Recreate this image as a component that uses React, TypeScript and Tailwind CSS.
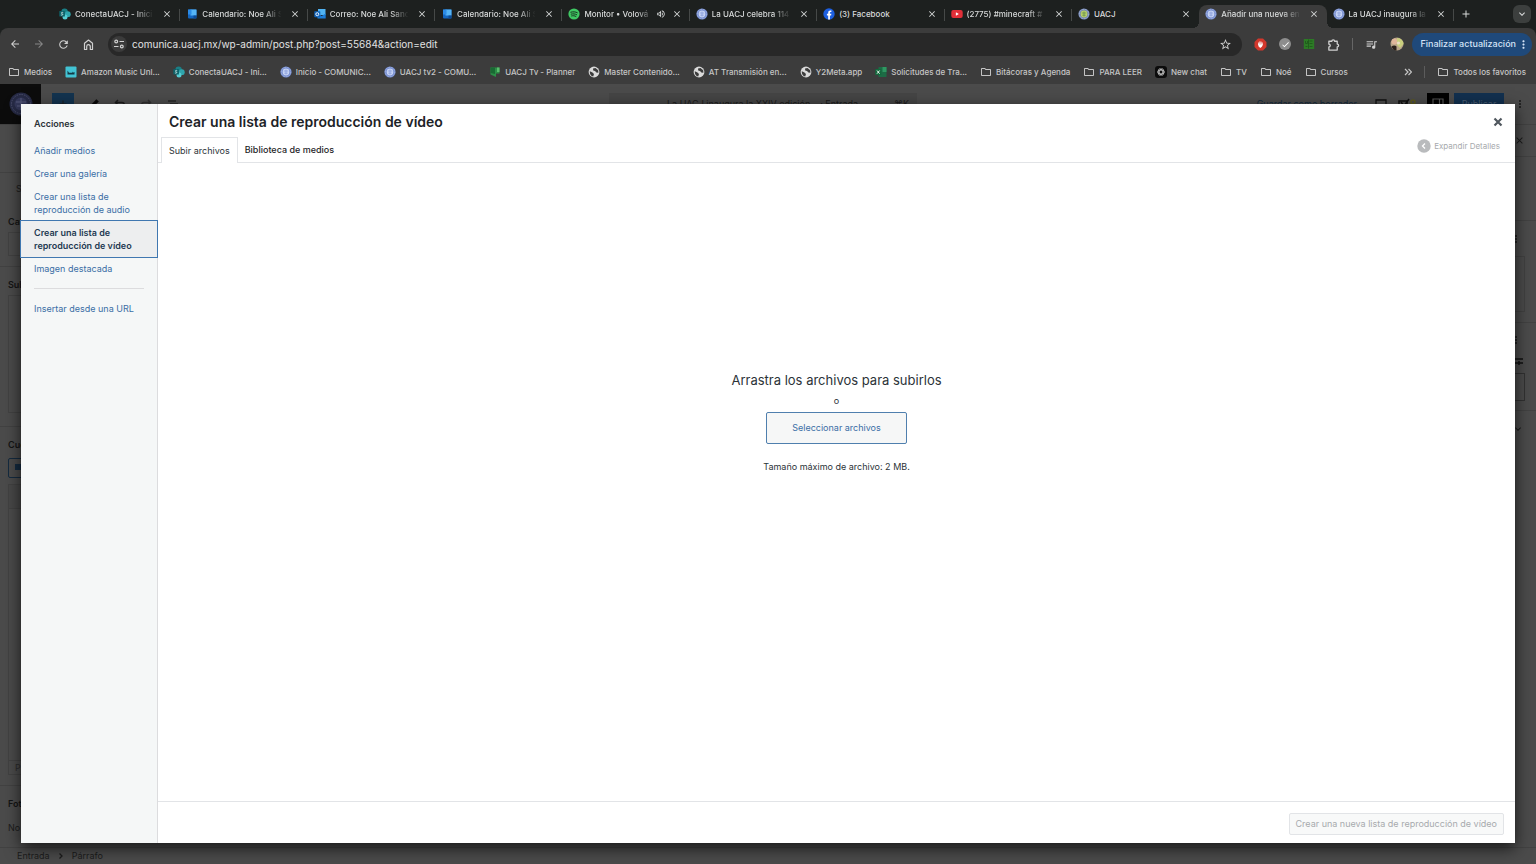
import type { ReactNode } from "react"
import {
  MdAdd,
  MdArrowBack,
  MdArrowForward,
  MdCheck,
  MdClose,
  MdExpandMore,
  MdMoreVert,
  MdOutlineFolder,
  MdOutlineVolumeUp,
  MdQueueMusic,
  MdRefresh,
  MdStarBorder,
} from "react-icons/md"

type IconName =
  | "sharepoint"
  | "calendar"
  | "outlook"
  | "spotify"
  | "crest"
  | "crestGreen"
  | "facebook"
  | "youtube"
  | "folder"
  | "amazon"
  | "planner"
  | "globe"
  | "excel"
  | "chat"

function Crest({ green }: { green?: boolean }) {
  return (
    <svg viewBox="0 0 12 12" className="size-3">
      <circle cx="6" cy="6" r="5.6" fill={green ? "#6f83ad" : "#6f88cc"} />
      <circle cx="6" cy="6" r="4.7" fill="none" stroke="#b4c2ea" strokeWidth=".9" strokeDasharray=".9 .7" />
      <circle cx="6" cy="6" r="3.4" fill={green ? "#b9cf6a" : "#c6d3f4"} />
      <path d="M6 3.5v5M3.8 5h4.4M4.300 7.200h3.400" stroke={green ? "#5f8a4a" : "#8299d8"} strokeWidth=".7" />
    </svg>
  )
}

function SiteIcon({ name }: { name: IconName }) {
  switch (name) {
    case "sharepoint":
      return (
        <svg viewBox="0 0 12 12" className="size-3">
          <circle cx="5.6" cy="3.6" r="3.2" fill="#1a7f86" />
          <circle cx="8.8" cy="6.2" r="2.9" fill="#2fa5ad" />
          <circle cx="6" cy="9" r="2.5" fill="#56cdd3" />
          <rect x=".3" y="3" width="5.6" height="5.6" rx=".6" fill="#0d6168" />
          <path d="M4.2 4.6c-1.6-.8-2.4.7-1.1 1.1 1.5.5.5 1.9-1.2 1.2" fill="none" stroke="#e5f6f6" strokeWidth=".8" />
        </svg>
      )
    case "calendar":
      return (
        <svg viewBox="0 0 12 12" className="size-3">
          <rect x="2" y="1.5" width="8.5" height="9" rx="1" fill="#1466c0" />
          <rect x="4.5" y="1.5" width="6" height="6" fill="#55b4f5" />
          <path d="M2 1.5h3.5v5H2Z" fill="#2b8be6" />
          <path d="M7.5 7.5h3v3h-3Z" fill="#0d4a94" />
        </svg>
      )
    case "outlook":
      return (
        <svg viewBox="0 0 12 12" className="size-3">
          <rect x="4" y="1" width="7.5" height="6" fill="#50b3f2" />
          <path d="M3.5 5.5 7.7 8l4-2.5v5H3.5Z" fill="#1c7cd6" />
          <rect x=".3" y="3.2" width="6" height="6" rx=".6" fill="#0f62b8" />
          <circle cx="3.3" cy="6.2" r="1.5" fill="none" stroke="#fff" strokeWidth=".9" />
        </svg>
      )
    case "spotify":
      return (
        <svg viewBox="0 0 12 12" className="size-3">
          <circle cx="6" cy="6" r="5.6" fill="#3fc863" />
          <path d="M2.8 4.2c2.2-.7 4.6-.5 6.5.5M3.2 6.1c1.9-.5 3.9-.3 5.5.6M3.6 7.9c1.5-.4 3-.2 4.3.5" fill="none" stroke="#183420" strokeWidth="1" strokeLinecap="round" />
        </svg>
      )
    case "crest":
      return <Crest />
    case "crestGreen":
      return <Crest green />
    case "facebook":
      return (
        <svg viewBox="0 0 12 12" className="size-3">
          <circle cx="6" cy="6" r="5.7" fill="#1d5fe0" />
          <path d="M5.2 11.6V7.5H3.9V5.8h1.3V4.7c0-1.5.8-2.3 2.2-2.3l1 .1V4h-.7c-.6 0-.8.3-.8.8v1h1.5l-.3 1.7H6.9v4.1Z" fill="#fff" />
        </svg>
      )
    case "youtube":
      return (
        <svg viewBox="0 0 12 12" className="size-3">
          <rect x=".3" y="2" width="11.4" height="8" rx="2" fill="#e02f38" />
          <path d="M4.9 4.3 7.9 6l-3 1.7Z" fill="#fff" />
        </svg>
      )
    case "folder":
      return <MdOutlineFolder className="size-3 text-[#c4c4c4]" />
    case "amazon":
      return (
        <svg viewBox="0 0 12 12" className="size-3">
          <rect x=".5" y=".5" width="11" height="11" rx="1" fill="#42c3d4" />
          <path d="M2.5 4.5v4h7V6l-1.7.8L7 5.500v1.2H5L4 6.7Z" fill="#123a46" />
        </svg>
      )
    case "planner":
      return (
        <svg viewBox="0 0 12 12" className="size-3">
          <path d="M1.5 1.5h9v6H7V11L1.5 8.5Z" fill="#2c8e47" />
          <path d="M1.5 1.5H6V8L1.5 7Z" fill="#196a33" />
          <path d="M8 1.5h2.5V6H8Z" fill="#59be6c" />
        </svg>
      )
    case "globe":
      return (
        <svg viewBox="0 0 12 12" className="size-3">
          <circle cx="6" cy="6" r="5.4" fill="#dadada" />
          <path d="M1.8 5.2 4.5 6.5 6 8l-.8 2.6C3 10.2 1.5 8 1.8 5.2ZM5 2.5 7.5 2l2.7 2.2.2 2.6-2-.3L7 5 5.2 4.6Z" fill="#3c3c3c" />
        </svg>
      )
    case "excel":
      return (
        <svg viewBox="0 0 12 12" className="size-3">
          <rect x="3.5" y="1" width="8" height="10" rx=".6" fill="#1d6b45" />
          <rect x="7.5" y="1" width="4" height="5" fill="#2f9862" />
          <rect x=".3" y="3" width="6" height="6" rx=".5" fill="#12693c" />
          <path d="m2 4.5 2.6 3.2M4.6 4.5 2 7.7" stroke="#fff" strokeWidth=".9" />
        </svg>
      )
    case "chat":
      return (
        <svg viewBox="0 0 12 12" className="size-3">
          <rect width="12" height="12" rx="3" fill="#0c0c0c" />
          <g fill="none" stroke="#cfcfcf" strokeWidth=".7">
            <ellipse cx="6" cy="6" rx="3.6" ry="1.9" />
            <ellipse cx="6" cy="6" rx="3.6" ry="1.9" transform="rotate(60 6 6)" />
            <ellipse cx="6" cy="6" rx="3.6" ry="1.9" transform="rotate(120 6 6)" />
          </g>
        </svg>
      )
  }
}

interface Tab {
  icon: IconName
  title: string
  audio?: boolean
  active?: boolean
}

const tabs: Tab[] = [
  { icon: "sharepoint", title: "ConectaUACJ - Inici" },
  { icon: "calendar", title: "Calendario: Noe Ali S" },
  { icon: "outlook", title: "Correo: Noe Ali Sanc" },
  { icon: "calendar", title: "Calendario: Noe Ali S" },
  { icon: "spotify", title: "Monitor • Volová", audio: true },
  { icon: "crest", title: "La UACJ celebra 114" },
  { icon: "facebook", title: "(3) Facebook" },
  { icon: "youtube", title: "(2775) #minecraft #" },
  { icon: "crestGreen", title: "UACJ" },
  { icon: "crest", title: "Añadir una nueva en", active: true },
  { icon: "crest", title: "La UACJ inaugura la" },
]

const bookmarks: { icon: IconName; label: string }[] = [
  { icon: "folder", label: "Medios" },
  { icon: "amazon", label: "Amazon Music Unl..." },
  { icon: "sharepoint", label: "ConectaUACJ - Ini..." },
  { icon: "crest", label: "Inicio - COMUNIC..." },
  { icon: "crest", label: "UACJ tv2 - COMU..." },
  { icon: "planner", label: "UACJ Tv - Planner" },
  { icon: "globe", label: "Master Contenido..." },
  { icon: "globe", label: "AT Transmisión en..." },
  { icon: "globe", label: "Y2Meta.app" },
  { icon: "excel", label: "Solicitudes de Tra..." },
  { icon: "folder", label: "Bitácoras y Agenda" },
  { icon: "folder", label: "PARA LEER" },
  { icon: "chat", label: "New chat" },
  { icon: "folder", label: "TV" },
  { icon: "folder", label: "Noé" },
  { icon: "folder", label: "Cursos" },
]

const actions = [
  { label: "Añadir medios" },
  { label: "Crear una galería" },
  { label: "Crear una lista de reproducción de audio" },
  { label: "Crear una lista de reproducción de vídeo", active: true },
  { label: "Imagen destacada" },
]

function TabStrip() {
  return (
    <div className="flex h-7 items-end bg-[#1d201f] pl-[53px] text-[8px] font-medium text-[#d8dada]">
      {tabs.map((tab, i) => {
        const divider = !tab.active && !tabs[i + 1]?.active
        return (
          <div
            key={i}
            className={`relative flex h-[23px] min-w-0 flex-1 items-center pr-2 pb-[5px] pl-[6px] ${
              tab.active ? "rounded-t-lg bg-[#3c3c3c]" : ""
            }`}
          >
            {tab.active && (
              <>
                <span className="absolute bottom-0 -left-1.5 size-1.5 bg-[radial-gradient(circle_at_0_0,transparent_6px,#3c3c3c_6px)]" />
                <span className="absolute -right-1.5 bottom-0 size-1.5 bg-[radial-gradient(circle_at_100%_0,transparent_6px,#3c3c3c_6px)]" />
              </>
            )}
            <a href="#" className="flex min-w-0 flex-1 items-center gap-1">
              <span className="shrink-0">
                <SiteIcon name={tab.icon} />
              </span>
              <span
                className={`min-w-0 flex-1 overflow-hidden whitespace-nowrap ${
                  tab.title.length > 15 ? "[mask-image:linear-gradient(to_right,black_75%,transparent_97%)]" : ""
                }`}
              >
                {tab.title}
              </span>
            </a>
            {tab.audio && <MdOutlineVolumeUp className="ml-px size-[10px] shrink-0" />}
            <button aria-label="Cerrar pestaña" className="ml-[6px] shrink-0">
              <MdClose className="size-[10px]" />
            </button>
            {divider && <span className="absolute top-1 right-0 h-3 w-px bg-[#464948]" />}
          </div>
        )
      })}
      <div className="flex h-full w-[82px] items-center justify-between pr-[5px] pl-[6px]">
        <button aria-label="Nueva pestaña">
          <MdAdd className="size-3" />
        </button>
        <button aria-label="Buscar pestañas" className="flex size-[18px] items-center justify-center rounded-md bg-[#3c3f3e]">
          <MdExpandMore className="size-3" />
        </button>
      </div>
    </div>
  )
}

function Toolbar() {
  return (
    <div className="bg-[#1d201f]">
      <div className="flex h-8 items-center rounded-t-lg bg-[#3c3c3c] pr-1 pl-2 text-[#d0d0d0]">
        <div className="flex items-center gap-3 px-px">
          <button aria-label="Atrás"><MdArrowBack className="size-3" /></button>
          <button aria-label="Adelante" className="text-[#858585]"><MdArrowForward className="size-3" /></button>
          <button aria-label="Recargar"><MdRefresh className="size-[13px]" /></button>
          <button aria-label="Inicio">
            <svg viewBox="0 0 13 13" className="size-[13px]" fill="none" stroke="currentColor" strokeWidth="1.2" strokeLinejoin="round">
              <path d="M2.5 5.2 6.5 2l4 3.2v6.300H8.300V8.500a1.800 1.800 0 0 0-3.600 0v3H2.5Z" />
            </svg>
          </button>
        </div>
        <div className="ml-3 flex h-[23px] min-w-0 flex-1 items-center rounded-full bg-[#282828] pr-[10px] pl-[3px]">
          <button aria-label="Información del sitio" className="flex size-4 shrink-0 items-center justify-center rounded-full bg-[#3b3b3b]">
            <svg viewBox="0 0 12 12" className="size-3" fill="none" stroke="currentColor" strokeWidth="1.2">
              <path d="M6.5 3.5H11M1 8.5h4.5" />
              <circle cx="3.2" cy="3.5" r="1.4" />
              <circle cx="8.8" cy="8.5" r="1.4" />
            </svg>
          </button>
          <input
            aria-label="Dirección"
            defaultValue="comunica.uacj.mx/wp-admin/post.php?post=55684&action=edit"
            className="ml-[5px] min-w-0 flex-1 bg-transparent text-[10px] text-[#e2e2e2] outline-none"
          />
          <button aria-label="Añadir a favoritos"><MdStarBorder className="size-[13px]" /></button>
        </div>
        <div className="flex items-center gap-3 pl-3">
          <svg viewBox="0 0 12 12" className="size-[13px]">
            <path d="M3.7.5h4.6l3.2 3.2v4.6l-3.2 3.2H3.7L.5 8.3V3.7Z" fill="#d3372c" />
            <path d="M4.300 6V4.500M5.400 5.500V3.500M6.500 5.500V3.700M7.600 6V4.500M4.300 6c0 3.800 3.200 3.400 3.300.2Z" stroke="#fff" strokeWidth=".8" fill="#fff" strokeLinecap="round" />
          </svg>
          <span className="flex size-3 items-center justify-center rounded-full bg-[#8d8d8d] text-white">
            <MdCheck className="size-[9px]" />
          </span>
          <svg viewBox="0 0 12 12" className="size-3">
            <rect x=".8" y="1" width="10.4" height="10" fill="#2c7a25" />
            <path d="M2.5 3v2.500h2V3M6.500 3h3M6.500 5.500h3M2.500 8.500h2M6.500 8.500h3M5.500 1.500v9" stroke="#205c1c" fill="none" />
          </svg>
          <button aria-label="Extensiones">
            <svg viewBox="0 0 14 14" className="size-[13px]" fill="none" stroke="currentColor" strokeWidth="1.4" strokeLinejoin="round">
              <path d="M2 3.5h3.2a1.5 1.5 0 0 1 3 0H11v3a1.5 1.5 0 0 1 0 3V13H2V9.700a1.500 1.500 0 0 0 0-3Z" />
            </svg>
          </button>
          <span className="h-3 w-px bg-[#666]" />
          <button aria-label="Multimedia"><MdQueueMusic className="size-[13px]" /></button>
          <svg viewBox="0 0 14 14" className="size-[14px]">
            <circle cx="7" cy="7" r="6.5" fill="#b9a58a" />
            <circle cx="4.5" cy="4.5" r="3" fill="#dfb69b" />
            <path d="M7 1c4 0 6.5 3 6.5 6L10 11 7 8Z" fill="#c9cf7d" />
            <path d="M1.500 9.500c2-1.500 4-1 5 0v4C4 13.500 2.500 12 1.500 9.500Z" fill="#2b201c" />
            <circle cx="8.5" cy="6" r="1.6" fill="#e9dcc4" />
          </svg>
        </div>
        <button className="ml-2 flex h-[23px] items-center rounded-full bg-[#1f497a] pr-[2px] pl-2 text-[9px] font-medium whitespace-nowrap text-[#d5e4f7]">
          Finalizar actualización
          <MdMoreVert className="ml-px size-[13px]" />
        </button>
      </div>
    </div>
  )
}

function Bookmark({ icon, label }: { icon: IconName; label: string }) {
  return (
    <a href="#" className="flex shrink-0 items-center gap-1 whitespace-nowrap">
      <SiteIcon name={icon} />
      {label}
    </a>
  )
}

function BookmarkBar() {
  return (
    <div className="flex h-6 items-center justify-between bg-[#3c3c3c] pr-[10px] pb-px pl-2 text-[8px] font-medium text-[#c6c6c6]">
      <div className="flex min-w-0 items-center gap-[13px] overflow-hidden">
        {bookmarks.map((b) => (
          <Bookmark key={b.label} {...b} />
        ))}
      </div>
      <div className="flex items-center gap-3">
        <button aria-label="Más favoritos">
          <svg viewBox="0 0 8 8" className="size-2" fill="none" stroke="currentColor" strokeWidth="1.2"><path d="m1 1 3 3-3 3M4.5 1l3 3-3 3" /></svg>
        </button>
        <span className="h-3 w-px bg-[#5c5c5c]" />
        <Bookmark icon="folder" label="Todos los favoritos" />
      </div>
    </div>
  )
}

function MetaBox({ title, className, children }: { title: string; className: string; children?: ReactNode }) {
  return (
    <section className={`border-b border-[#424242] pl-2 ${className}`}>
      <h2 className="pt-3 pb-1 leading-[12px] font-semibold text-[#141414]">{title}</h2>
      {children}
    </section>
  )
}

// Block editor left under the modal backdrop, colours already dimmed
function Editor() {
  return (
    <div className="flex h-full flex-col overflow-hidden bg-[#4b4b4b] text-[9px] text-[#1c1c1c]">
      <header className="flex h-[41px] shrink-0 items-center border-b border-[#424242]">
        <div className="flex h-full flex-1 items-center">
          <div className="flex h-full w-[41px] items-center justify-center bg-[#0c0c0c]">
            <svg viewBox="0 0 24 24" className="size-6">
              <circle cx="12" cy="12" r="11.5" fill="#262a45" />
              <circle cx="12" cy="12" r="9.5" fill="none" stroke="#4a4d6b" strokeDasharray="1.5 1" />
              <circle cx="12" cy="12" r="6.500" fill="#34385a" />
              <path d="M12 6v12M7 10h10M8 14h8" stroke="#565a7c" />
            </svg>
          </div>
          <div className="ml-[11px] flex items-center gap-[14px]">
            <span className="flex size-[22px] items-center justify-center bg-[#13334f]"><MdAdd className="size-3" /></span>
            <svg viewBox="0 0 10 10" className="size-3"><path d="M1 9V7l6-6 2 2-6 6Z" fill="#080808" /></svg>
            <svg viewBox="0 0 12 12" className="size-3" fill="none" stroke="#1c1c1c" strokeWidth="1.5"><path d="M4 2 1.5 4.5 4 7M2 4.500h6c3 0 3 5 0 5" /></svg>
            <svg viewBox="0 0 12 12" className="size-3" fill="none" stroke="#303030" strokeWidth="1.5"><path d="m8 2 2.5 2.5L8 7M10 4.500H4c-3 0-3 5 0 5" /></svg>
            <svg viewBox="0 0 12 12" className="size-3" stroke="#151515" strokeWidth="1.2"><path d="M2 3h8M4 6h8M2 10h6" /></svg>
          </div>
        </div>
        <div className="flex h-[22px] w-[308px] items-center justify-between bg-[#454545] pr-2 pl-[58px]">
          <span className="flex gap-[10px] whitespace-nowrap">
            <span>La UACJ inaugura la XXIV edición</span>
            <span>· Entrada</span>
          </span>
          <span>⌘K</span>
        </div>
        <div className="flex flex-1 items-center justify-end gap-[10px] pr-[10px]">
          <span className="mr-2 text-[#142a3d]">Guardar como borrador</span>
          <svg viewBox="0 0 12 12" className="size-3" fill="none" stroke="#111" strokeWidth="1.3"><path d="M1 2h10v7H1ZM4 11h4" /></svg>
          <svg viewBox="0 0 20 12" className="h-3 w-5" fill="none" stroke="#111" strokeWidth="1.5"><path d="M2 3h8v8H2Z" /><path d="m4 4 3 4 5-7" /><circle cx="16" cy="4" r="2" stroke="#5d5a1e" /></svg>
          <span className="flex items-center gap-[5px]">
            <span className="flex size-[22px] items-center justify-center bg-black">
              <svg viewBox="0 0 12 12" className="size-3" fill="none" stroke="#555" strokeWidth="1.2"><path d="M1 1h10v10H1ZM7.5 1v10" /></svg>
            </span>
            <span className="flex h-[22px] w-[50px] items-center justify-center bg-[#12304f] text-[#4b5f75]">Publicar</span>
          </span>
          <MdMoreVert className="size-3" />
        </div>
      </header>
      <div className="flex min-h-0 flex-1 justify-between">
        <div className="w-40 overflow-hidden">
          <div className="h-12 border-b border-[#424242]" />
          <p className="h-[31px] pt-[10px] pl-4 leading-[12px]">SEO</p>
          <MetaBox title="Categorías" className="h-[63px]">
            <div className="h-6 w-36 border border-[#424242]" />
          </MetaBox>
          <MetaBox title="Subtítulo" className="h-[160px]">
            <div className="h-[118px] w-36 border border-[#424242]" />
          </MetaBox>
          <MetaBox title="Cuerpo" className="h-[359px]">
            <div className="mt-[3px] flex h-5 w-24 items-center rounded-xs border border-[#142b40] pl-[6px] text-[#142b40]">
              <svg viewBox="0 0 12 12" className="size-3" fill="currentColor"><path d="M0 2h7v6H0ZM8 1h3v8a2 2 0 1 1-1-2V3H8Z" /></svg>
            </div>
            <div className="mt-[6px] flex h-[291px] w-36 flex-col justify-between border border-[#424242]">
              <span className="h-6 w-full border-b border-[#424242] bg-[#484848]" />
              <span className="border-t border-[#424242] pl-[6px] leading-[13px] text-[#2b2b2b]">P</span>
            </div>
          </MetaBox>
          <MetaBox title="Fotografía" className="border-b-0">
            <p className="pt-2 leading-[12px]">No hay imagen</p>
          </MetaBox>
        </div>
        <div className="flex w-40 flex-col items-end">
          <div className="flex h-8 w-full items-center justify-end border-b border-[#424242] pr-[11px]"><MdClose className="size-[11px]" /></div>
          <div className="h-16 w-full border-b border-[#424242]" />
          <div className="flex h-[102px] w-full flex-col items-end border-b border-[#424242] pt-3 pr-[11px]">
            <MdMoreVert className="mr-[3px] size-3" />
            <div className="mt-[11px] h-14 w-32 border border-[#424242]" />
          </div>
          <div className="flex h-[88px] w-full flex-col items-end border-b border-[#424242] pt-[11px] pr-[11px]">
            <MdMoreVert className="mr-[3px] size-3" />
            <svg viewBox="0 0 12 12" className="mt-[9px] mr-[2px] size-3" stroke="#111" strokeWidth="1.5"><path d="M0 4h12M0 8h12M8 6v4" /></svg>
            <div className="mt-[6px] h-7 w-32 border border-[#323232]" />
          </div>
          <MdExpandMore className="mt-3 mr-3 size-3" />
        </div>
      </div>
      <footer className="flex h-[17px] shrink-0 items-center gap-2 border-t border-[#424242] pl-[17px]">
        <span>Entrada</span>
        <svg viewBox="0 0 6 8" className="h-2 w-[6px]" fill="none" stroke="currentColor" strokeWidth="1.3"><path d="m1.5 1.5 2.5 2.5-2.5 2.5" /></svg>
        <span>Párrafo</span>
      </footer>
    </div>
  )
}

function MediaModal() {
  return (
    <div
      role="dialog"
      aria-label="Crear una lista de reproducción de vídeo"
      className="absolute inset-x-[21px] top-5 bottom-[21px] flex bg-white text-[9px] text-[#2c3338] shadow-[0_5px_15px_rgba(0,0,0,0.7)]"
    >
      <aside className="w-[137px] shrink-0 border-r border-[#dcdcde] bg-[#f5f7f7] pt-[13px] leading-[13px]">
        <h2 className="px-[13px] pb-[9px] font-semibold">Acciones</h2>
        <nav className="flex flex-col">
          {actions.map((a) => (
            <button
              key={a.label}
              className={`px-[13px] py-[5px] text-left ${
                a.active
                  ? "bg-[#edeeef] font-semibold text-[#243a52] outline outline-[#4077b0]"
                  : "text-[#3a6ea5]"
              }`}
            >
              {a.label}
            </button>
          ))}
          <hr className="mx-[13px] my-2 border-[#dcdcde]" />
          <button className="px-[13px] py-[5px] text-left whitespace-nowrap text-[#3a6ea5]">Insertar desde una URL</button>
        </nav>
      </aside>
      <div className="flex min-w-0 flex-1 flex-col">
        <div className="flex items-start justify-between pr-[11px] pl-[11px]">
          <h1 className="pt-2 text-sm leading-5 font-semibold text-[#1d2327]">Crear una lista de reproducción de vídeo</h1>
          <button aria-label="Cerrar" className="mt-3 text-[#50575e]">
            <svg viewBox="0 0 12 12" className="size-3" stroke="currentColor" strokeWidth="2.2"><path d="m2.5 2.5 7 7M9.5 2.5l-7 7" /></svg>
          </button>
        </div>
        <div className="flex items-end justify-between border-b border-[#e2e4e7] pr-[15px] pl-[3px]">
          <div className="mt-[5px] flex" role="tablist">
            <button role="tab" className="-mb-px h-[26px] border border-b-0 border-[#e2e4e7] bg-white px-[7px] text-[#2c3338]">Subir archivos</button>
            <button role="tab" className="px-[7px] pt-px font-medium text-[#1d2327]">Biblioteca de medios</button>
          </div>
          <button className="mb-[9px] flex items-center gap-[3px] text-[8px] leading-[14px] text-[#a7aaad]">
            <svg viewBox="0 0 14 14" className="size-[14px]"><circle cx="7" cy="7" r="6.7" fill="#b9bbbd" /><path d="M8 4.5 5.5 7 8 9.5" fill="none" stroke="#fff" strokeWidth="1.3" /></svg>
            Expandir Detalles
          </button>
        </div>
        <div className="flex min-h-0 flex-1 flex-col items-center justify-center pb-[120px]">
          <h2 className="text-[13px] leading-5">Arrastra los archivos para subirlos</h2>
          <p className="mt-1 leading-[14px]">o</p>
          <button className="mt-1 h-8 rounded-xs border border-[#4f7fae] bg-[#f6f7f7] px-[25px] text-[#3a6ea5]">Seleccionar archivos</button>
          <p className="mt-4 leading-[14px]">Tamaño máximo de archivo: 2 MB.</p>
        </div>
        <div className="flex h-[42px] items-center justify-end border-t border-[#e2e4e7] pt-[2px] pr-[11px]">
          <button disabled className="h-[22px] rounded-xs border border-[#e2e4e7] bg-[#f8f9f9] px-[6px] text-[#a7aaad]">
            Crear una nueva lista de reproducción de vídeo
          </button>
        </div>
      </div>
    </div>
  )
}

export default function App() {
  return (
    <div className="flex h-screen flex-col overflow-hidden font-[Inter,sans-serif]">
      <TabStrip />
      <Toolbar />
      <BookmarkBar />
      <main className="relative min-h-0 flex-1">
        <Editor />
        <MediaModal />
      </main>
    </div>
  )
}
